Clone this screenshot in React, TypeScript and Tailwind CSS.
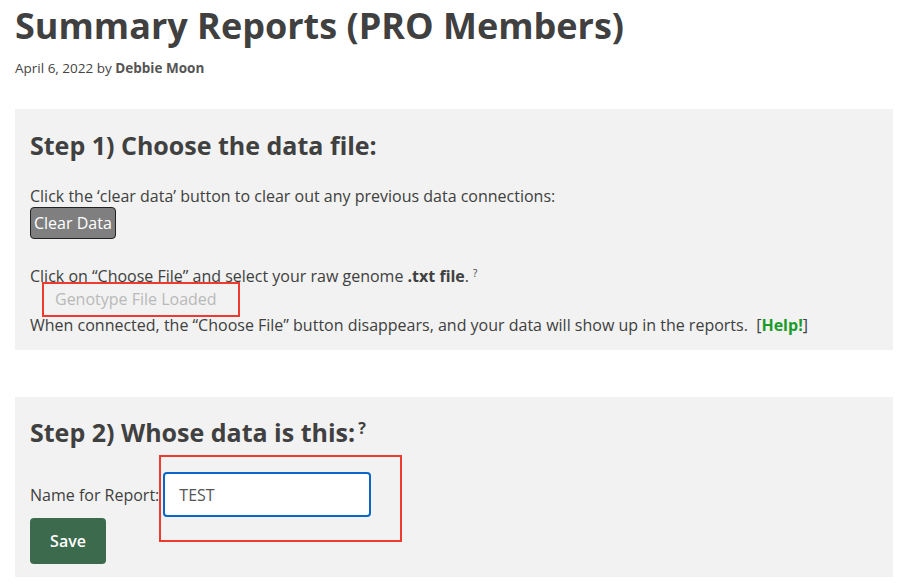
export default function App() {
  return (
    <div className="min-h-[588px] bg-white px-[15px] font-['Open_Sans',sans-serif] text-[#404040]">
      {/* Header */}
      <h1 className="pt-[3px] text-[36px] font-bold leading-[46px] text-[#404040]">
        Summary Reports (PRO Members)
      </h1>
      <div className="mt-[10px] text-[13.5px] leading-[18px] text-[#444]">
        April 6, 2022 by <span className="font-bold text-[#555]">Debbie Moon</span>
      </div>

      {/* Step 1 */}
      <section className="mt-[32px] w-[878px] bg-[#f1f2f1] px-[15px] pt-[18px] pb-[14px]">
        <h2 className="text-[25px] font-bold leading-[36px] text-[#404040]">Step 1) Choose the data file:</h2>
        <p className="mt-[22px] text-[16px] leading-[22px]">
          Click the ‘clear data’ button to clear out any previous data connections:
        </p>
        <button className="block h-[32px] rounded-[4px] border border-[#222] bg-[#7f7f7f] px-[3px] text-[16px] leading-[20px] text-white">
          Clear Data
        </button>
        <p className="mt-[26px] text-[16px] leading-[22px]">
          Click on “Choose File” and select your raw genome <b>.txt file</b>.
          <sup className="ml-[4px] text-[10px]">?</sup>
        </p>
        <div className="ml-[12px] mt-[-5px] h-[35px] w-[198px] border-2 border-[#ee3b2f] pl-[11px] text-[16px] leading-[31px] text-[#b9b9b9]">
          Genotype File Loaded
        </div>
        <p className="mt-[-3px] text-[16px] leading-[22px]">
          When connected, the “Choose File” button disappears, and your data will show up in the reports.&nbsp;&nbsp;[
          <span className="font-bold text-[#1b9b2b]">Help!</span>]
        </p>
      </section>

      {/* Step 2 */}
      <section className="mt-[47px] w-[878px] bg-[#f1f2f1] px-[15px] pt-[17px] pb-[13px]">
        <h2 className="text-[25px] font-bold leading-[36px] text-[#404040]">
          Step 2) Whose data is this:<sup className="ml-[3px] text-[16px]">?</sup>
        </h2>
        <div className="relative mt-[22px] flex items-center">
          <label className="text-[16px] leading-[22px]">Name for Report:</label>
          <div className="ml-[4px] flex h-[45px] w-[208px] items-center rounded-[4px] border-2 border-[#0a66c8] bg-white pl-[14px] text-[16px] text-[#555]">
            TEST
          </div>
          <div className="pointer-events-none absolute left-[129px] top-[-17px] h-[87px] w-[243px] border-2 border-[#ee3b2f]" />
        </div>
        <button className="mt-[1px] h-[46px] w-[76px] rounded-[4px] bg-[#3b6a4d] text-[16px] font-semibold text-white">
          Save
        </button>
      </section>
    </div>
  )
}
